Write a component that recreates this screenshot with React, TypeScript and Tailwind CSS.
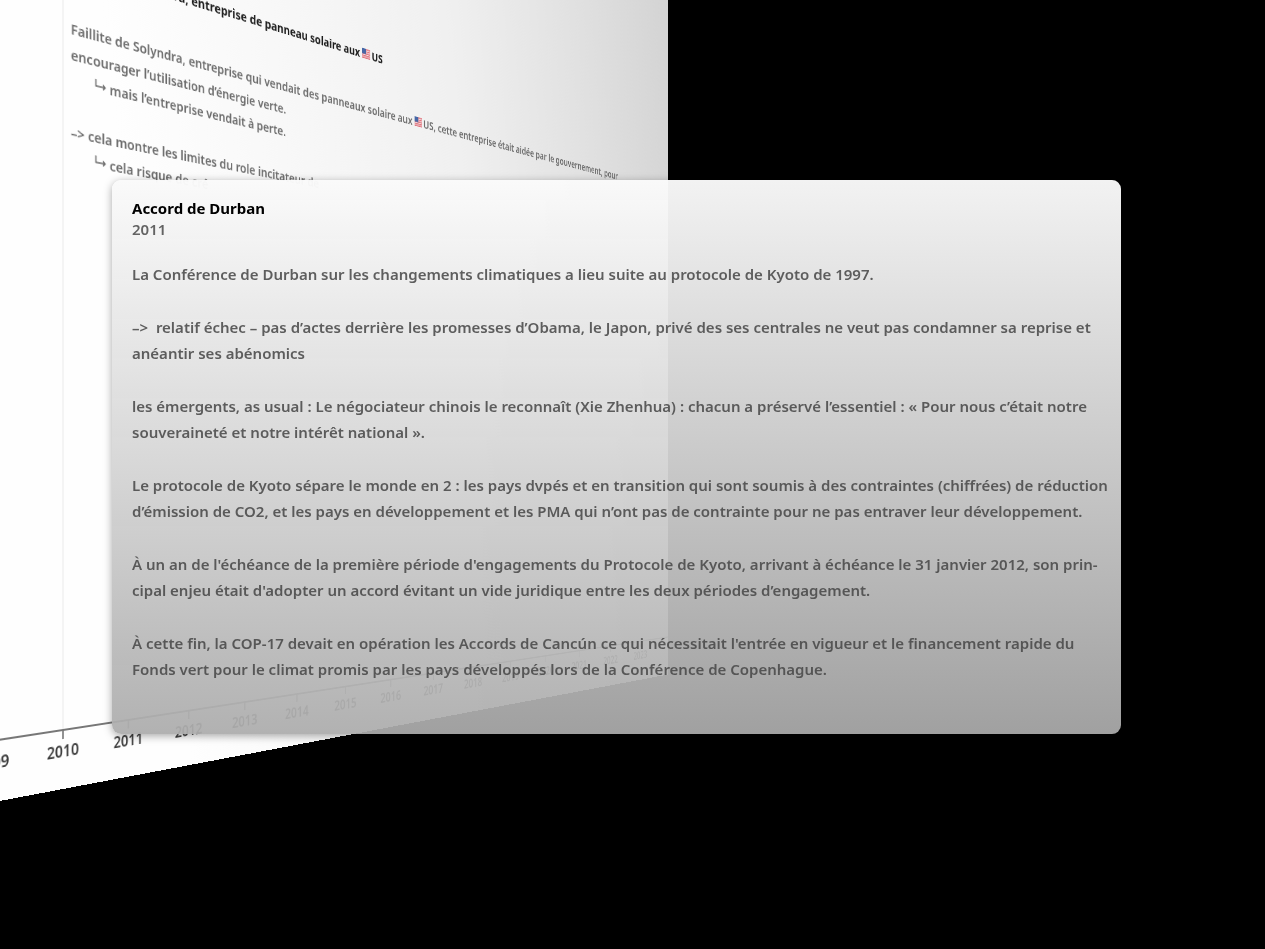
const years = [
  '2009', '2010', '2011', '2012', '2013', '2014', '2015', '2016',
  '2017', '2018', '2019', '2020', '2021', '2022', '2023',
];

const paragraphs: string[][] = [
  ['La Conférence de Durban sur les changements climatiques a lieu suite au protocole de Kyoto de 1997.'],
  [
    '–>  relatif échec – pas d’actes derrière les promesses d’Obama, le Japon, privé des ses centrales ne veut pas condamner sa reprise et',
    'anéantir ses abénomics',
  ],
  [
    'les émergents, as usual : Le négociateur chinois le reconnaît (Xie Zhenhua) : chacun a préservé l’essentiel : « Pour nous c’était notre',
    'souveraineté et notre intérêt national ».',
  ],
  [
    'Le protocole de Kyoto sépare le monde en 2 : les pays dvpés et en transition qui sont soumis à des contraintes (chiffrées) de réduction',
    'd’émission de CO2, et les pays en développement et les PMA qui n’ont pas de contrainte pour ne pas entraver leur développement.',
  ],
  [
    "À un an de l'échéance de la première période d'engagements du Protocole de Kyoto, arrivant à échéance le 31 janvier 2012, son prin-",
    "cipal enjeu était d'adopter un accord évitant un vide juridique entre les deux périodes d’engagement.",
  ],
  [
    "À cette fin, la COP-17 devait en opération les Accords de Cancún ce qui nécessitait l'entrée en vigueur et le financement rapide du",
    'Fonds vert pour le climat promis par les pays développés lors de la Conférence de Copenhague.',
  ],
];

function Flag() {
  return (
    <svg viewBox="0 0 16 12" className="inline-block h-3 w-4 align-baseline" aria-hidden="true">
      <rect width="14" height="12" rx="1" fill="#f3dfe0" />
      <path d="M0 1h14M0 3.6h14M0 6.2h14M0 8.8h14M0 11.3h14" stroke="#e0727c" strokeWidth="1.4" />
      <rect width="7" height="6.5" fill="#4767a6" />
    </svg>
  );
}

function SubArrow() {
  return (
    <svg viewBox="0 0 16 14" className="mr-0.5 inline-block h-3.5 w-4 align-baseline" fill="none" stroke="currentColor" strokeWidth="1.5" aria-hidden="true">
      <path d="M1.5 1v7h11M10 5.5l2.5 2.5-2.5 2.5" />
    </svg>
  );
}

function Timeline() {
  return (
    <div className="absolute inset-0 overflow-hidden [perspective:1560px]">
      <div className="absolute -top-[300px] -left-[54px] flex h-[1089px] w-[1206px] origin-[117px_50%] flex-col justify-between overflow-hidden bg-linear-[82deg] from-[#fefefe] from-20% via-[#f0f0f0] via-60% to-[#d3d3d3] [transform:rotateY(55deg)]">
        <div className="ml-[116px] grow border-l-2 border-[#f3f3f3] pt-[250px] pl-2 whitespace-nowrap">
          <h2 className="text-[15px] leading-5 font-bold text-[#1c1c1c]">
            Faillite de Solyndra, entreprise de panneau solaire aux <Flag />US
          </h2>
          <div className="mt-[43px] text-[15px] leading-[26px] font-semibold text-[#6c6c6c]">
            <p>
              Faillite de Solyndra, entreprise qui vendait des panneaux solaire aux <Flag />US, cette entreprise était aidée par le gouvernement, pour
              <br />
              encourager l’utilisation d’énergie verte.
            </p>
            <p className="pl-7"><SubArrow />mais l’entreprise vendait à perte.</p>
            <p className="mt-[26px]">–&gt; cela montre les limites du role incitateur de</p>
            <p className="pl-7"><SubArrow />cela risque de cré</p>
          </div>
        </div>
        <ol className="flex h-[60px] shrink-0 border-t-2 border-[#777777]">
          {years.map((year) => (
            <li key={year} className="flex w-[78px] shrink-0 flex-col items-center text-base leading-5 font-semibold text-[#3a3a3a]">
              <span className="mb-0.5 h-2 w-0.5 bg-[#8a8a8a]" />
              {year}
            </li>
          ))}
        </ol>
      </div>
    </div>
  );
}

export default function App() {
  return (
    <main className="relative min-h-screen bg-black pt-[180px] pr-36 pl-28 font-['Noto_Sans','Open_Sans',sans-serif]">
      <Timeline />
      <article className="relative rounded-[9px] bg-linear-to-b from-[#fafafaf7] via-[#d6d6d6f0] via-50% to-[#acacacee] px-5 pt-[18px] pb-[52px] shadow-[0_2px_8px_rgba(0,0,0,0.35)]">
        <h1 className="text-[15px] leading-[21px] font-bold text-black">Accord de Durban</h1>
        <p className="text-[15px] leading-[21px] font-semibold text-[#636363]">2011</p>
        <div className="mt-[21px] flex flex-col gap-[27px] text-[15px] leading-[26px] font-semibold whitespace-pre text-[#484848dd]">
          {paragraphs.map((lines) => (
            <p key={lines[0]}>{lines.join('\n')}</p>
          ))}
        </div>
      </article>
    </main>
  );
}
